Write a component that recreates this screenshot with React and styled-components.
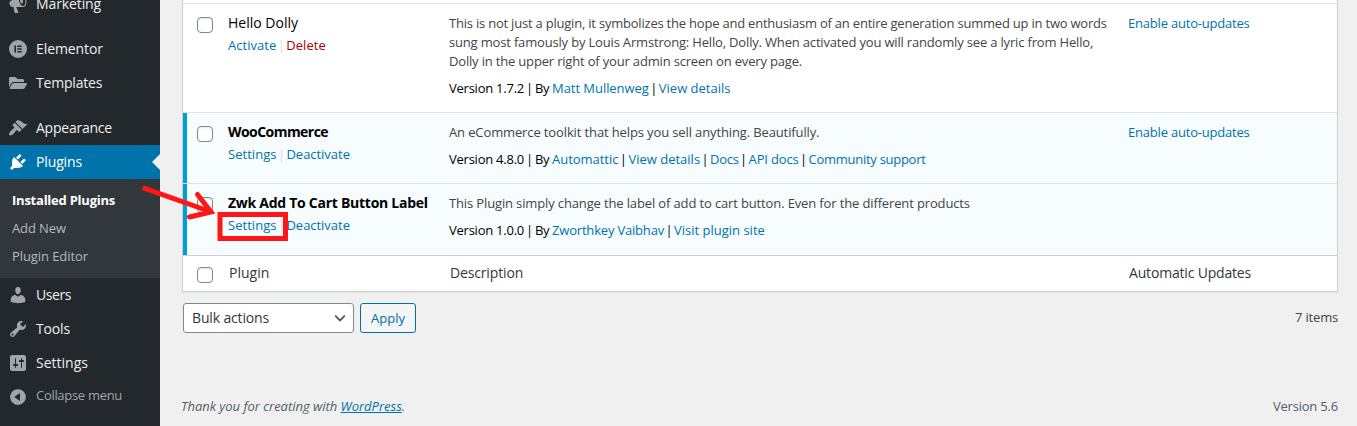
import React from 'react';
import styled, { createGlobalStyle, css } from 'styled-components';
import { FaFolderOpen } from 'react-icons/fa';

const GlobalStyle = createGlobalStyle`
  *, *::before, *::after { box-sizing: border-box; }
  body {
    margin: 0;
    background: #f0f0f0;
    color: #444;
    font: 13px/19px "Open Sans", "Noto Sans", sans-serif;
    overflow: hidden;
  }
`;

const Page = styled.div`
  position: relative;
  display: flex;
  width: 1357px;
  height: 426px;
  overflow: hidden;
`;

const T = styled.span`
  letter-spacing: ${(p) => p.$track || 0}px;
  white-space: nowrap;
`;

/* Sidebar */
const Sidebar = styled.nav`
  flex: none;
  width: 160px;
  height: 426px;
  margin: 0;
  background: #23282d;
`;

const MenuList = styled.div`
  margin-top: -13px;
`;

const MenuItem = styled.a`
  display: flex;
  align-items: center;
  justify-content: flex-start;
  height: 34px;
  padding-left: 8px;
  gap: 8px;
  font-size: ${(p) => (p.$small ? 13 : 14)}px;
  color: ${(p) => (p.$small ? '#a0a5aa' : '#eee')};
  ${(p) =>
    p.$current &&
    css`
      position: relative;
      color: #fff;
      background: #0073aa;
      &::after {
        content: '';
        position: absolute;
        right: 0;
        top: 9px;
        border: 8px solid transparent;
        border-left-width: 0;
        border-right-color: #f0f0f0;
      }
    `}
`;

const MenuLabel = styled(T)`
  padding-bottom: ${(p) => (p.$small ? 4 : 2)}px;
`;

const MenuIcon = styled.span`
  display: flex;
  flex: none;
  align-items: center;
  justify-content: center;
  width: 20px;
  height: 20px;
  color: ${(p) => (p.$current ? '#fff' : '#a0a5aa')};
`;

const MenuGap = styled.div`
  height: 11px;
`;

const SubMenu = styled.div`
  display: flex;
  flex-direction: column;
  padding: 7px 0 8px;
  background: #32373c;
`;

const SubItem = styled.a`
  padding-left: 12px;
  line-height: 28px;
  color: ${(p) => (p.$current ? '#fff' : '#b4b9be')};
  font-weight: ${(p) => (p.$current ? 700 : 400)};
`;

/* Content */
const Content = styled.main`
  display: flex;
  flex-direction: column;
  flex: 1;
  padding: 0 19px 0 22px;
`;

const Table = styled.section`
  border: 1px solid #ccd0d4;
  border-top: 0;
  background: #fff;
  box-shadow: 0 1px 1px rgba(0, 0, 0, 0.04);
`;

const RowSliver = styled.div`
  height: 4px;
  border-bottom: 1px solid #e1e1e1;
`;

const Row = styled.div`
  display: grid;
  grid-template-columns: 45px 221px 679px 1fr;
  height: ${(p) => p.$height}px;
  padding-top: 10px;
  border-bottom: 1px solid ${(p) => (p.$last ? '#ccd0d4' : '#e1e1e1')};
  background: ${(p) => (p.$active ? '#f7fcfe' : '#fff')};
  box-shadow: ${(p) => (p.$active ? 'inset 4px 0 0 #00a0d2' : 'none')};
`;

const Checkbox = styled.span`
  width: 16px;
  height: 16px;
  margin: 3px 0 0 14px;
  border: 1px solid #7e8993;
  border-radius: 4px;
  background: #fff;
  box-shadow: inset 0 1px 2px rgba(0, 0, 0, 0.1);
`;

const FootRow = styled.div`
  display: grid;
  grid-template-columns: 46px 221px 679px 1fr;
  height: 35px;
  padding-top: 7px;
  font-size: 14px;
  color: #32373c;

  ${Checkbox} {
    margin-top: 4px;
  }
`;

const Stack = styled.div`
  display: flex;
  flex-direction: column;
  gap: ${(p) => p.$gap}px;
`;

const Name = styled.strong`
  margin: -1px 0 1px;
  font-size: 14px;
  color: #000;
  font-weight: ${(p) => (p.$active ? 700 : 400)};
`;

const Actions = styled.div`
  display: flex;
  color: #ddd;
`;

const Meta = styled.div`
  display: flex;
  color: #000;
`;

const Bar = styled.i`
  width: ${(p) => p.$width || 10}px;
  font-style: normal;
  text-align: center;
`;

const Link = styled.a`
  color: ${(p) => (p.$danger ? '#a00' : '#0073aa')};
  letter-spacing: ${(p) => p.$track || 0}px;
  white-space: nowrap;
  ${(p) => p.$underline && 'text-decoration: underline;'}
`;

const By = styled.span`
  width: 17px;
  letter-spacing: -0.4px;
`;

const Toolbar = styled.div`
  display: flex;
  align-items: center;
  height: 30px;
  margin: 11px 0 0 1px;
`;

const Select = styled.div`
  display: flex;
  align-items: center;
  justify-content: space-between;
  width: 171px;
  height: 30px;
  padding: 0 7px 0 8px;
  border: 1px solid #7e8993;
  border-radius: 3px;
  background: #fff;
  color: #32373c;
  font-size: 14px;

  ${T} {
    padding-bottom: 2px;
  }
`;

const Button = styled.button`
  width: 56px;
  height: 30px;
  margin-left: 6px;
  padding: 0;
  border: 1px solid #0071a1;
  border-radius: 3px;
  background: #f3f5f6;
  color: #0071a1;
  font: inherit;
`;

const Count = styled.span`
  margin-left: auto;
  padding-bottom: 2px;
  letter-spacing: -0.18px;
  color: #444;
`;

const Footer = styled.footer`
  display: flex;
  justify-content: space-between;
  margin: 64px 0 0 -1px;
  color: #555d66;
`;

const Thanks = styled.em`
  letter-spacing: -0.03px;
`;

const Annotation = styled.svg`
  position: absolute;
  left: 0;
  top: 0;
  pointer-events: none;
`;

const ICONS = {
  megaphone:
    'M18.15 5.94c.46 1.62.38 3.22-.02 4.48-.42 1.28-1.26 2.18-2.3 2.48-.16.06-.26.06-.4.06-.06.02-.12.02-.18.02-.06.02-.14.02-.22.02h-6.8l2.22 5.5c.02.14-.06.26-.14.34-.08.1-.24.16-.34.16H6.95c-.1 0-.26-.06-.34-.16-.08-.08-.16-.2-.14-.34l-1-5.5H4.25l-.02-.02c-.5.06-1.08-.18-1.54-.62s-.88-1.08-1.06-1.88c-.24-.8-.2-1.56-.02-2.2.18-.62.58-1.08 1.06-1.3l.02-.02 9-5.4c.1-.06.18-.1.24-.16.06-.04.14-.08.24-.12.16-.08.28-.12.5-.18 1.04-.3 2.24.1 3.22.98s1.84 2.24 2.26 3.86zm-2.58 5.98h-.02c.4-.1.74-.34 1.04-.7.58-.7.86-1.76.86-3.04 0-.64-.1-1.3-.28-1.98-.34-1.36-1.02-2.5-1.78-3.24s-1.68-1.1-2.46-.88c-.82.22-1.4.96-1.7 2-.32 1.04-.28 2.36.06 3.72.38 1.36 1 2.5 1.8 3.24.78.74 1.62 1.1 2.48.88zm-2.54-7.08c.22-.04.42-.02.62.04.38.16.76.48 1.02 1s.42 1.2.42 1.78c0 .3-.04.56-.12.8-.18.48-.44.84-.86.94-.34.1-.8-.06-1.14-.4s-.64-.86-.78-1.5c-.18-.62-.12-1.24.02-1.72s.48-.84.82-.94z',
  elementor:
    'M10 1a9 9 0 1 0 0 18 9 9 0 0 0 0-18zM6.4 6.6H8v6.8H6.4zM9.3 6.6h4.4v1.5H9.3zM9.3 9.25h4.4v1.5H9.3zM9.3 11.9h4.4v1.5H9.3z',
  appearance:
    'M14.48 11.06L7.41 3.99l1.5-1.5c.5-.56 2.3-.47 3.51.32 1.21.8 1.43 1.28 2.91 2.1 1.18.64 2.45 1.26 4.45.85zm-.71.71L6.7 4.7 4.93 6.47c-.39.39-.39 1.02 0 1.41l1.06 1.06c.39.39.39 1.03 0 1.42-.6.6-1.43 1.11-2.21 1.69-.35.26-.7.53-1.01.84C1.43 14.23.4 16.08 1.4 17.07c.99 1 2.84-.03 4.18-1.36.31-.31.58-.66.85-1.02.57-.78 1.08-1.61 1.69-2.21.39-.39 1.02-.39 1.41 0l1.06 1.06c.39.39 1.02.39 1.41 0z',
  plugins:
    'M13.11 4.36L9.87 7.6 8 5.73l3.24-3.24c.35-.34 1.05-.2 1.56.32.52.51.66 1.21.31 1.55zm-8 1.77l.91-1.12 9.01 9.01-1.19.84c-.71.71-2.63 1.16-3.82 1.16H6.14L4.9 17.26c-.59.59-1.54.59-2.12 0-.59-.58-.59-1.53 0-2.12l1.24-1.24v-3.88c0-1.13.4-3.19 1.09-3.89zm7.26 3.97l3.24-3.24c.34-.35 1.04-.21 1.55.31.52.51.66 1.21.31 1.55l-3.24 3.25z',
  users:
    'M10 9.25c-2.27 0-2.73-3.44-2.73-3.44C7 4.02 7.82 2 9.97 2c2.16 0 2.98 2.02 2.71 3.81 0 0-.41 3.44-2.68 3.44zm0 2.57L12.72 10c2.39 0 4.52 2.33 4.52 4.53v2.49s-3.65 1.13-7.24 1.13c-3.65 0-7.24-1.13-7.24-1.13v-2.49c0-2.25 1.94-4.48 4.47-4.48z',
  tools:
    'M16.68 9.77c-1.34 1.34-3.3 1.67-4.95.99l-5.41 6.52c-.99.99-2.59.99-3.58 0s-.99-2.59 0-3.57l6.52-5.42c-.68-1.65-.35-3.61.99-4.95 1.28-1.28 3.12-1.62 4.72-1.06l-2.89 2.89 2.82 2.82 2.86-2.87c.53 1.58.18 3.39-1.08 4.65zM3.81 16.21c.4.39 1.04.39 1.43 0 .4-.4.4-1.04 0-1.43-.39-.4-1.03-.4-1.43 0-.39.39-.39 1.03 0 1.43z',
  settings:
    'M18 16V4c0-1.1-.9-2-2-2H4c-1.1 0-2 .9-2 2v12c0 1.1.9 2 2 2h12c1.1 0 2-.9 2-2zM8 11h1c.55 0 1 .45 1 1s-.45 1-1 1H8v1.5c0 .28-.22.5-.5.5s-.5-.22-.5-.5V13H6c-.55 0-1-.45-1-1s.45-1 1-1h1V5.5c0-.28.22-.5.5-.5s.5.22.5.5V11zm5-2h-1c-.55 0-1-.45-1-1s.45-1 1-1h1V5.5c0-.28.22-.5.5-.5s.5.22.5.5V7h1c.55 0 1 .45 1 1s-.45 1-1 1h-1v5.5c0 .28-.22.5-.5.5s-.5-.22-.5-.5V9z',
  collapse:
    'M10 2.16c4.33 0 7.84 3.51 7.84 7.84s-3.51 7.84-7.84 7.84S2.16 14.33 2.16 10 5.71 2.16 10 2.16zm2 11.72V6.12L6.18 9.97z',
};

const Glyph = ({ name }) => (
  <svg width="20" height="20" viewBox="0 0 20 20" fill="currentColor" fillRule="evenodd">
    <path d={ICONS[name]} />
  </svg>
);

const NavItem = ({ icon, label, track, current, small }) => (
  <MenuItem $current={current} $small={small}>
    <MenuIcon $current={current}>
      {icon === 'folder' ? <FaFolderOpen size={18} /> : <Glyph name={icon} />}
    </MenuIcon>
    <MenuLabel $track={track} $small={small}>{label}</MenuLabel>
  </MenuItem>
);

const PLUGINS = [
  {
    name: 'Hello Dolly',
    height: 109,
    actions: [['Activate', 0.03], ['Delete', 0.05, true]],
    description: [
      ['This is not just a plugin, it symbolizes the hope and enthusiasm of an entire generation summed up in two words', -0.212],
      ['sung most famously by Louis Armstrong: Hello, Dolly. When activated you will randomly see a lyric from Hello,', -0.173],
      ['Dolly in the upper right of your admin screen on every page.', -0.177],
    ],
    version: 'Version 1.7.2',
    links: [['Matt Mullenweg', -0.05], ['View details', 0]],
    updates: true,
  },
  {
    name: 'WooCommerce',
    nameTrack: -0.55,
    height: 71,
    active: true,
    actions: [['Settings', 0.03], ['Deactivate', -0.03]],
    description: [['An eCommerce toolkit that helps you sell anything. Beautifully.', -0.125]],
    version: 'Version 4.8.0',
    links: [['Automattic', -0.03], ['View details', 0], ['Docs', -0.3], ['API docs', -0.15], ['Community support', -0.28]],
    updates: true,
  },
  {
    name: 'Zwk Add To Cart Button Label',
    nameTrack: -0.27,
    height: 72,
    active: true,
    last: true,
    actions: [['Settings', 0.03], ['Deactivate', -0.03]],
    description: [['This Plugin simply change the label of add to cart button. Even for the different products', -0.136]],
    version: 'Version 1.0.0',
    links: [['Zworthkey Vaibhav', -0.19], ['Visit plugin site', 0]],
  },
];

const PluginRow = ({ plugin }) => (
  <Row $height={plugin.height} $active={plugin.active} $last={plugin.last}>
    <Checkbox />
    <Stack $gap={3}>
      <Name $active={plugin.active}>
        <T $track={plugin.nameTrack}>{plugin.name}</T>
      </Name>
      <Actions>
        {plugin.actions.map(([label, track, danger], i) => (
          <React.Fragment key={label}>
            {i > 0 && <Bar>|</Bar>}
            <Link $track={track} $danger={danger}>{label}</Link>
          </React.Fragment>
        ))}
      </Actions>
    </Stack>
    <Stack $gap={8}>
      <div>
        {plugin.description.map(([line, track]) => (
          <div key={line}>
            <T $track={track}>{line}</T>
          </div>
        ))}
      </div>
      <Meta>
        <T $track={-0.24}>{plugin.version}</T>
        <Bar $width={11}>|</Bar>
        <By>By</By>
        {plugin.links.map(([label, track], i) => (
          <React.Fragment key={label}>
            {i > 0 && <Bar>|</Bar>}
            <Link $track={track}>{label}</Link>
          </React.Fragment>
        ))}
      </Meta>
    </Stack>
    {plugin.updates && <Link $track={-0.2}>Enable auto-updates</Link>}
  </Row>
);

export default function App() {
  return (
    <Page>
      <GlobalStyle />
      <Sidebar>
        <MenuList>
          <NavItem icon="megaphone" label="Marketing" track={-0.11} />
          <MenuGap />
          <NavItem icon="elementor" label="Elementor" track={-0.08} />
          <NavItem icon="folder" label="Templates" track={-0.2} />
          <MenuGap />
          <NavItem icon="appearance" label="Appearance" track={-0.23} />
          <NavItem icon="plugins" label="Plugins" track={-0.13} current />
          <SubMenu>
            <SubItem $current><T $track={-0.235}>Installed Plugins</T></SubItem>
            <SubItem><T $track={-0.1}>Add New</T></SubItem>
            <SubItem><T $track={-0.08}>Plugin Editor</T></SubItem>
          </SubMenu>
          <NavItem icon="users" label="Users" track={-0.4} />
          <NavItem icon="tools" label="Tools" track={-0.15} />
          <NavItem icon="settings" label="Settings" />
          <NavItem icon="collapse" label="Collapse menu" track={-0.3} small />
        </MenuList>
      </Sidebar>
      <Content>
        <Table>
          <RowSliver />
          {PLUGINS.map((plugin) => (
            <PluginRow key={plugin.name} plugin={plugin} />
          ))}
          <FootRow>
            <Checkbox />
            <T>Plugin</T>
            <T $track={-0.15}>Description</T>
            <T $track={-0.18}>Automatic Updates</T>
          </FootRow>
        </Table>
        <Toolbar>
          <Select>
            <T $track={-0.15}>Bulk actions</T>
            <svg width="12" height="8" viewBox="0 0 12 8" fill="none" stroke="#555" strokeWidth="1.8">
              <path d="M1.2 1.7l4.8 4.8 4.8-4.8" />
            </svg>
          </Select>
          <Button>Apply</Button>
          <Count>7 items</Count>
        </Toolbar>
        <Footer>
          <Thanks>
            Thank you for creating with <Link $underline>WordPress</Link>.
          </Thanks>
          <T $track={-0.2}>Version 5.6</T>
        </Footer>
      </Content>
      <Annotation width="1357" height="426" fill="none" stroke="#ff1616" strokeWidth="5">
        <path d="M142.7 187.7L210 211.5" />
        <path d="M197.5 194.5L211 212L189.5 217" strokeLinecap="round" />
        <rect x="220" y="214.5" width="65.5" height="24" />
      </Annotation>
    </Page>
  );
}
